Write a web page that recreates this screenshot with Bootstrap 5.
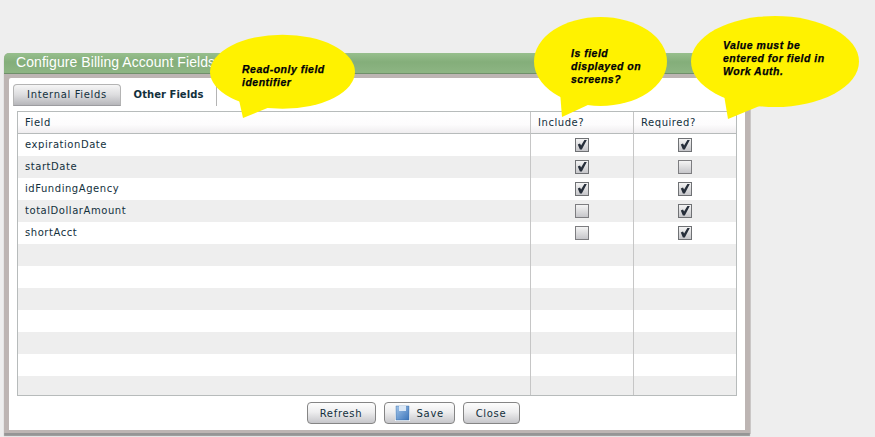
<!doctype html>
<html lang="en">
<head>
<meta charset="utf-8">
<title>Configure Billing Account Fields</title>
<link href="https://cdn.jsdelivr.net/npm/bootstrap@5.3.0/dist/css/bootstrap.min.css" rel="stylesheet">
<style>
html,body{height:437px;overflow:hidden}
body{background:#eeeeee;font-family:"DejaVu Sans",sans-serif;font-size:10px;color:#12303c;position:relative}
.stage{padding:53px 0 0 4px}
.cfg-win{width:746px;border:0;border-radius:5px 5px 0 0;background:#bdb5b3;padding:0 5px 3px;box-shadow:0 3px 1px #959595,1px 1px 0 #d0cccb}
.cfg-head{height:21px;margin:0 -5px;padding:0 12px;border-radius:5px 5px 0 0;border-bottom:1px solid #6f8f6a;background:linear-gradient(#97bf8d,#84ae7a 45%,#8db583);color:#fff;font:14px/19px "Liberation Sans",sans-serif;letter-spacing:.07px}
.cfg-body{margin-top:4px;height:352px;background:#fff;border-radius:2px 2px 0 0;padding:6px 8px 0}
.cfg-tabs{margin:0 0 5px -4px;height:22px;border:0;flex-wrap:nowrap}
.cfg-tab{height:22px;border:1px solid #b4b4b4;border-bottom:0;border-radius:4px 4px 0 0;font-size:10px;line-height:20px;letter-spacing:.65px;text-align:center;color:#12303c;text-decoration:none;display:block}
.cfg-tab.off{width:108px;background:linear-gradient(#f6f6f6,#dcdcde 50%,#b6b6ba);border-bottom:1px solid #9c9ca0}
.cfg-tab.on{width:96px;background:#fff;border-width:0 1px 0 0;border-radius:0;font-weight:700;padding-top:1px;letter-spacing:.05px}
.cfg-grid{height:285px;border:1px solid #b7bbbb;overflow:hidden;background:#fff}
.cfg-table{table-layout:fixed;width:718px;margin:0;border-collapse:separate;border-spacing:0;--bs-table-bg:transparent;--bs-table-striped-bg:#eeeeee;--bs-table-striped-color:#12303c;color:#12303c}
.cfg-table th,.cfg-table td{height:22px;padding:0 0 0 7px;font-size:10px;font-weight:400;line-height:20px;letter-spacing:.55px;border:0;box-shadow:none;vertical-align:middle;color:#12303c}
.cfg-table tbody tr:nth-child(even) td{background:#eeeeee}
.cfg-table th{background:linear-gradient(#fff,#fdfcfd 60%,#efedef);border-bottom:1px solid #b7bbbb}
.cfg-table .vl{border-left:1px solid #c6c6c6}
.cfg-table td.vl{padding:0;text-align:center}
.cfg-table thead .vl{padding-left:7px}
.cbx{display:inline-block;width:14px;height:14px;vertical-align:middle;margin-top:-1px}
.cbx svg{display:block}
.cfg-foot{height:28px;margin-top:6px;gap:8px;padding-left:72px}
.cfg-btn{height:22px;padding:0;border:1px solid #858585;border-radius:4px;background:linear-gradient(#fdfdfd,#eeeeef 45%,#c6c6ca);color:#12303c;font-size:10px;line-height:19px;letter-spacing:.7px}
.b-ref{width:69px}.b-sav{width:71px;display:flex;align-items:center;justify-content:flex-start;padding-left:10px;gap:7px}.b-clo{width:57px}
.b-sav svg{flex:none}
.callouts{position:absolute;left:0;top:0;width:875px;height:437px;pointer-events:none}
.callouts text{font:italic 700 10.5px "Liberation Sans",sans-serif;fill:#000008;stroke:#000008;stroke-width:.25px;letter-spacing:.5px}
</style>
</head>
<body>
<svg width="0" height="0" class="position-absolute">
  <defs>
    <linearGradient id="boxg" x1="0" y1="0" x2="0" y2="1"><stop offset="0" stop-color="#f6f6f6"/><stop offset="1" stop-color="#c4c4c8"/></linearGradient>
    <symbol id="cbon" viewBox="0 0 14 14"><rect x=".5" y=".5" width="13" height="13" fill="url(#boxg)" stroke="#6f7174"/><path d="M2.8 6.4 5 5.6l1.1 2L9.4 2h2.4L6.8 11.6H4.9z" fill="#262e3a"/></symbol>
    <symbol id="cboff" viewBox="0 0 14 14"><rect x=".5" y=".5" width="13" height="13" fill="url(#boxg)" stroke="#7d7d80"/></symbol>
  </defs>
</svg>
<div class="stage">
  <div class="card cfg-win">
    <div class="cfg-head">Configure Billing Account Fields</div>
    <div class="cfg-body">
      <ul class="nav cfg-tabs">
        <li class="nav-item"><a class="cfg-tab off" href="#">Internal Fields</a></li>
        <li class="nav-item"><a class="cfg-tab on" href="#">Other Fields</a></li>
      </ul>
      <div class="cfg-grid">
        <table class="table cfg-table">
          <colgroup><col style="width:512px"><col style="width:103px"><col style="width:103px"></colgroup>
          <thead><tr><th>Field</th><th class="vl">Include?</th><th class="vl">Required?</th></tr></thead>
          <tbody>
            <tr><td>expirationDate</td><td class="vl"><span class="cbx"><svg width="14" height="14"><use href="#cbon"/></svg></span></td><td class="vl"><span class="cbx"><svg width="14" height="14"><use href="#cbon"/></svg></span></td></tr>
            <tr><td>startDate</td><td class="vl"><span class="cbx"><svg width="14" height="14"><use href="#cbon"/></svg></span></td><td class="vl"><span class="cbx"><svg width="14" height="14"><use href="#cboff"/></svg></span></td></tr>
            <tr><td>idFundingAgency</td><td class="vl"><span class="cbx"><svg width="14" height="14"><use href="#cbon"/></svg></span></td><td class="vl"><span class="cbx"><svg width="14" height="14"><use href="#cbon"/></svg></span></td></tr>
            <tr><td>totalDollarAmount</td><td class="vl"><span class="cbx"><svg width="14" height="14"><use href="#cboff"/></svg></span></td><td class="vl"><span class="cbx"><svg width="14" height="14"><use href="#cbon"/></svg></span></td></tr>
            <tr><td>shortAcct</td><td class="vl"><span class="cbx"><svg width="14" height="14"><use href="#cboff"/></svg></span></td><td class="vl"><span class="cbx"><svg width="14" height="14"><use href="#cbon"/></svg></span></td></tr>
            <tr><td></td><td class="vl"></td><td class="vl"></td></tr>
            <tr><td></td><td class="vl"></td><td class="vl"></td></tr>
            <tr><td></td><td class="vl"></td><td class="vl"></td></tr>
            <tr><td></td><td class="vl"></td><td class="vl"></td></tr>
            <tr><td></td><td class="vl"></td><td class="vl"></td></tr>
            <tr><td></td><td class="vl"></td><td class="vl"></td></tr>
            <tr><td></td><td class="vl"></td><td class="vl"></td></tr>
          </tbody>
        </table>
      </div>
      <div class="d-flex justify-content-center cfg-foot">
        <button type="button" class="btn cfg-btn b-ref">Refresh</button>
        <button type="button" class="btn cfg-btn b-sav"><svg width="15" height="16" viewBox="0 0 15 16"><defs><linearGradient id="flop" x1="0" y1="0" x2="1" y2="1"><stop offset="0" stop-color="#a4c6ea"/><stop offset="1" stop-color="#3a74ba"/></linearGradient></defs><rect x="0" y="0" width="15" height="16" fill="#fff"/><rect x="1" y="1" width="13" height="14" fill="url(#flop)" stroke="#3f6fa8" stroke-width=".5"/><rect x="4" y="1" width="7" height="5" fill="#dbe8f6"/></svg><span>Save</span></button>
        <button type="button" class="btn cfg-btn b-clo">Close</button>
      </div>
    </div>
  </div>
</div>
<svg class="callouts" viewBox="0 0 875 437">
  <g fill="#fff200">
    <ellipse cx="282.5" cy="71.8" rx="72.5" ry="37"/>
    <path d="M239 100 243 118 270 107z"/>
    <ellipse cx="600.5" cy="61.5" rx="66.5" ry="44.5"/>
    <path d="M560 92 562 117 590 104z"/>
    <ellipse cx="775" cy="61.5" rx="84" ry="45.5"/>
    <path d="M724 95 728 119 762 105z"/>
  </g>
  <text x="242" y="73">Read-only field</text>
  <text x="242" y="86">identifier</text>
  <text x="571" y="57">Is field</text>
  <text x="571" y="70">displayed on</text>
  <text x="571" y="83">screens?</text>
  <text x="723" y="49">Value must be</text>
  <text x="723" y="62">entered for field in</text>
  <text x="723" y="75">Work Auth.</text>
</svg>
<script src="https://cdn.jsdelivr.net/npm/bootstrap@5.3.0/dist/js/bootstrap.bundle.min.js"></script>
</body>
</html>
